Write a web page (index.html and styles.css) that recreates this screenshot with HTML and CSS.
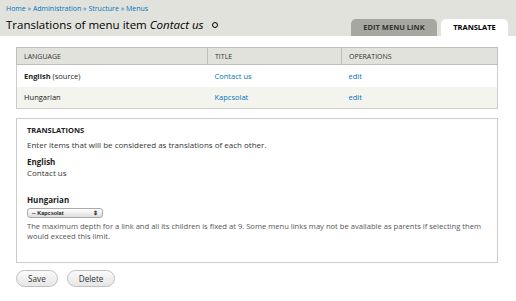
FILE: index.html
```html
<!DOCTYPE html>
<html>
<head>
<meta charset="utf-8">
<link rel="stylesheet" href="styles.css">
</head>
<body>
<div class="header">
  <div class="crumbs"><a>Home</a> » <a>Administration</a> » <a>Structure</a> » <a>Menus</a></div>
  <div class="titlebar">
    <h1>Translations of menu item <em>Contact us</em> <span class="ring"></span></h1>
    <div class="tabs">
      <a class="tab">EDIT MENU LINK</a>
      <a class="tab active">TRANSLATE</a>
    </div>
  </div>
</div>
<div class="content">
  <table class="tbl">
    <thead>
      <tr><th class="c1">LANGUAGE</th><th class="c2">TITLE</th><th class="c3">OPERATIONS</th></tr>
    </thead>
    <tbody>
      <tr class="odd"><td><b>English</b> (source)</td><td><a>Contact us</a></td><td><a>edit</a></td></tr>
      <tr class="even"><td>Hungarian</td><td><a>Kapcsolat</a></td><td><a>edit</a></td></tr>
    </tbody>
  </table>
  <div class="fieldset">
    <div class="legend">TRANSLATIONS</div>
    <p class="intro">Enter items that will be considered as translations of each other.</p>
    <div class="item">
      <div class="label">English</div>
      <div>Contact us</div>
    </div>
    <div class="item hu">
      <div class="label">Hungarian</div>
      <div class="select"><span>-- Kapcsolat</span><span class="arr">⇕</span></div>
      <div class="desc">The maximum depth for a link and all its children is fixed at 9. Some menu links may not be available as parents if selecting them would exceed this limit.</div>
    </div>
  </div>
  <div class="actions">
    <button class="btn">Save</button>
    <button class="btn">Delete</button>
  </div>
</div>
</body>
</html>
```
FILE: styles.css
```css
* { box-sizing: border-box; }
html, body { margin: 0; padding: 0; background: #fff; }
body { font-family: "Open Sans", "DejaVu Sans", sans-serif; font-size: 8px; color: #333; }
a { color: #0074bd; text-decoration: none; }
.header { background: #e1e2dc; height: 36px; padding: 4px 0 0 6px; }
.crumbs { font-size: 7px; line-height: 10px; color: #0074bd; }
.crumbs a { color: #0074bd; }
.titlebar { display: flex; justify-content: space-between; align-items: flex-end; height: 22px; }
h1 { margin: 0; font-weight: normal; font-size: 11.5px; color: #000; line-height: 20px; align-self: center; }
h1 em { font-style: italic; }
.ring { display: inline-block; width: 6px; height: 6px; border: 1.3px solid #000; border-radius: 50%; margin-left: 5px; vertical-align: 1px; }
.tabs { display: flex; gap: 4px; margin-right: 8px; }
.tab { display: block; height: 17px; line-height: 17px; font-size: 7.5px; font-weight: bold; color: #333; background: #a6a7a1; border-radius: 5px 5px 0 0; text-align: center; width: 86px; }
.tab.active { background: #fff; color: #000; width: 67px; }
.content { padding: 11px 18px 0 16px; }
.tbl { width: 100%; border-collapse: collapse; border: 1px solid #ccc; }
.tbl th { background: #e1e2dc; font-weight: normal; text-align: left; font-size: 7px; color: #333; height: 17px; padding: 0 7px; border: 1px solid #bebfb9; }
.tbl th.c1 { width: 191px; }
.tbl th.c2 { width: 134px; }
.tbl td { height: 22px; padding: 0 7px; font-size: 7.5px; color: #222; }
.tbl tr.odd td { background: #fff; }
.tbl tr.even td { background: #f3f4ee; }
.fieldset { margin-top: 9px; border: 1px solid #ccc; padding: 6px 10px 14px; height: 145px; }
.legend { font-weight: bold; font-size: 7.5px; line-height: 10px; color: #222; }
.intro { margin: 5px 0 0; line-height: 10px; }
.item { margin-top: 6px; line-height: 11px; }
.label { font-weight: bold; color: #222; }
.hu { margin-top: 16px; }
.select { margin-top: 3px; width: 76px; height: 10px; border: 1px solid #aaa; border-radius: 3px; background: linear-gradient(#fff, #ddd); font-size: 5.5px; font-family: "Liberation Sans", sans-serif; font-weight: bold; display: flex; justify-content: space-between; align-items: center; padding: 0 4px; color: #222; }
.arr { font-size: 6px; }
.desc { margin-top: 4px; font-size: 7.6px; line-height: 9.5px; color: #555; }
.actions { display: flex; gap: 9px; margin-top: 7px; }
.btn { font-family: inherit; font-size: 8.2px; color: #333; height: 17px; border: 1px solid #c0c0c0; border-radius: 9px; background: linear-gradient(#fafafa, #e6e6e6); padding: 0 11px; }
```
